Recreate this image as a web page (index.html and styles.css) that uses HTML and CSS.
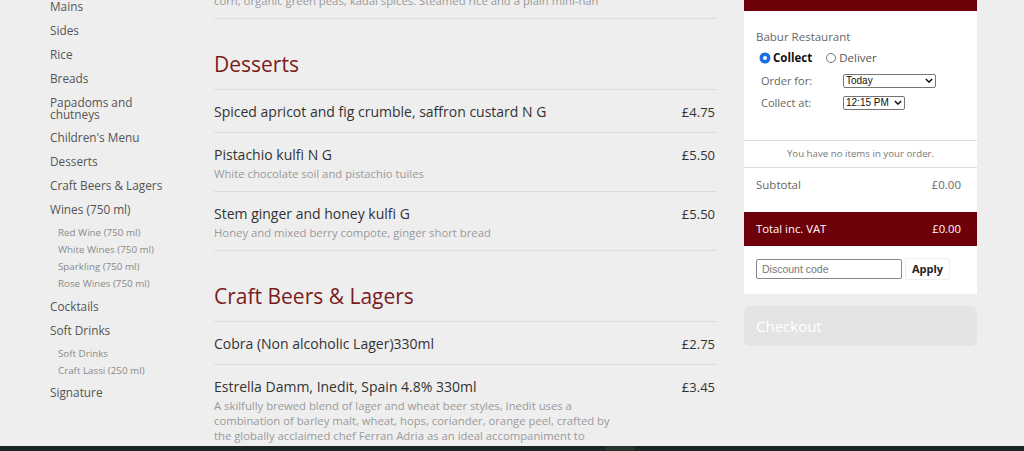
FILE: index.html
```html
<!DOCTYPE html>
<html lang="en">
<head>
<meta charset="utf-8">
<title>Babur Restaurant - Order</title>
<link rel="stylesheet" href="styles.css">
</head>
<body>
<div class="layout">
  <nav class="sidebar">
    <ul class="cats">
      <li class="cat">Mains</li>
      <li class="cat">Sides</li>
      <li class="cat">Rice</li>
      <li class="cat">Breads</li>
      <li class="cat two">Papadoms and<br>chutneys</li>
      <li class="cat">Children's Menu</li>
      <li class="cat">Desserts</li>
      <li class="cat">Craft Beers &amp; Lagers</li>
      <li class="cat">Wines (750 ml)
        <ul class="subs">
          <li class="sub">Red Wine (750 ml)</li>
          <li class="sub">White Wines (750 ml)</li>
          <li class="sub">Sparkling (750 ml)</li>
          <li class="sub">Rose Wines (750 ml)</li>
        </ul>
      </li>
      <li class="cat">Cocktails</li>
      <li class="cat">Soft Drinks
        <ul class="subs">
          <li class="sub">Soft Drinks</li>
          <li class="sub">Craft Lassi (250 ml)</li>
        </ul>
      </li>
      <li class="cat">Signature</li>
    </ul>
  </nav>

  <main class="menu">
    <section class="section">
      <ul class="items first">
        <li class="item">
          <div class="item-text">
            <div class="name">Vegetable thali</div>
            <div class="desc">Paneer makhani, dal, mixed vegetables, sweet<br>corn, organic green peas, kadai spices. Steamed rice and a plain mini-nan</div>
          </div>
          <div class="price">£14.95</div>
        </li>
      </ul>
    </section>

    <section class="section">
      <h2 class="heading">Desserts</h2>
      <ul class="items">
        <li class="item">
          <div class="item-text"><div class="name">Spiced apricot and fig crumble, saffron custard N G</div></div>
          <div class="price">£4.75</div>
        </li>
        <li class="item">
          <div class="item-text">
            <div class="name">Pistachio kulfi N G</div>
            <div class="desc">White chocolate soil and pistachio tuiles</div>
          </div>
          <div class="price">£5.50</div>
        </li>
        <li class="item">
          <div class="item-text">
            <div class="name">Stem ginger and honey kulfi G</div>
            <div class="desc">Honey and mixed berry compote, ginger short bread</div>
          </div>
          <div class="price">£5.50</div>
        </li>
      </ul>
    </section>

    <section class="section">
      <h2 class="heading">Craft Beers &amp; Lagers</h2>
      <ul class="items">
        <li class="item">
          <div class="item-text"><div class="name">Cobra (Non alcoholic Lager)330ml</div></div>
          <div class="price">£2.75</div>
        </li>
        <li class="item">
          <div class="item-text">
            <div class="name">Estrella Damm, Inedit, Spain 4.8% 330ml</div>
            <div class="desc">A skilfully brewed blend of lager and wheat beer styles, Inedit uses a<br>combination of barley malt, wheat, hops, coriander, orange peel, crafted by<br>the globally acclaimed chef Ferran Adria as an ideal accompaniment to<br>food.</div>
          </div>
          <div class="price">£3.45</div>
        </li>
      </ul>
    </section>
  </main>

  <aside class="order">
    <div class="panel">
      <div class="panel-head"></div>
      <div class="panel-body">
        <div class="restaurant">Babur Restaurant</div>
        <div class="mode">
          <label class="radio"><span class="dot on"></span><b>Collect</b></label>
          <label class="radio"><span class="dot"></span>Deliver</label>
        </div>
        <div class="field">
          <span class="label">Order for:</span>
          <span class="select wide">Today<svg class="chev" viewBox="0 0 10 6" width="8" height="5"><path d="M1 1l4 4 4-4" fill="none" stroke="#111" stroke-width="1.8"/></svg></span>
        </div>
        <div class="field">
          <span class="label">Collect at:</span>
          <span class="select">12:15 PM<svg class="chev" viewBox="0 0 10 6" width="8" height="5"><path d="M1 1l4 4 4-4" fill="none" stroke="#111" stroke-width="1.8"/></svg></span>
        </div>
      </div>
      <div class="empty">You have no items in your order.</div>
      <div class="row subtotal"><span>Subtotal</span><span>£0.00</span></div>
      <div class="row total"><span>Total inc. VAT</span><span>£0.00</span></div>
      <div class="discount">
        <span class="input">Discount code</span>
        <span class="apply">Apply</span>
      </div>
    </div>
    <div class="checkout">Checkout</div>
  </aside>
</div>
<div class="footer-bar"><span class="footer-tab"></span></div>
</body>
</html>
```

FILE: styles.css
```css
* { box-sizing: border-box; }
html, body { margin: 0; padding: 0; }
body {
  background: #eeeeee;
  font-family: "Open Sans", "Liberation Sans", sans-serif;
  color: #333;
  height: 451px;
  overflow: hidden;
}
ul { list-style: none; margin: 0; padding: 0; }

.layout {
  display: grid;
  grid-template-columns: 186px 502px 233px;
  column-gap: 28px;
  align-items: start;
}

/* sidebar */
.sidebar { padding-left: 50px; margin-top: -6px; }
.cat {
  font-size: 11.8px;
  line-height: 12px;
  padding: 6px 0;
  color: #555;
}
.cat.two { line-height: 12px; padding: 5.5px 0; }
.subs { padding: 9px 0 0 8px; margin-bottom: -4.5px; }
.sub {
  font-size: 9.8px;
  line-height: 17px;
  color: #8a8a8a;
}

/* menu */
.menu { margin-top: -55px; }
.heading {
  margin: 0;
  padding: 30px 0 10px;
  font-size: 21px;
  line-height: 30px;
  font-weight: 400;
  color: #7a1c1c;
}
.items { border-top: 1px solid #dcdcdc; }
.items.first { border-top: 0; }
.item {
  display: flex;
  justify-content: space-between;
  padding: 12px 0 10px;
  border-bottom: 1px solid #dcdcdc;
}
.name { font-size: 14px; line-height: 20px; color: #333; }
.desc {
  margin-top: 1px;
  font-size: 11.3px;
  line-height: 15px;
  color: #9a9a9a;
}
.price { font-size: 13px; line-height: 20px; color: #333; padding-right: 1px; }

/* order panel */
.order { margin-top: -29px; }
.panel { background: #fff; padding-bottom: 14px; }
.panel-head { height: 40px; background: #6d0008; }
.panel-body { padding: 19px 12px 30px; border-bottom: 1px solid #dedede; }
.restaurant { font-size: 11.5px; line-height: 14px; color: #666; }
.mode { display: flex; gap: 14px; margin-top: 7px; padding-left: 4px; font-size: 11.5px; line-height: 14px; }
.radio { display: flex; align-items: center; gap: 3px; color: #555; }
.radio b { color: #111; }
.dot {
  width: 10px; height: 10px; border-radius: 50%;
  border: 1px solid #777; background: #fff;
}
.dot.on { border: 3px solid #1a6fe0; background: #fff; box-shadow: 0 0 0 0.5px #1a6fe0; }
.field { display: flex; align-items: center; margin-top: 8px; padding-left: 5px; }
.field + .field { margin-top: 7px; }
.label { width: 82px; font-size: 11px; color: #666; }
.select {
  display: flex; align-items: center; justify-content: space-between;
  height: 14px; padding: 0 2px;
  border: 1px solid #767676; border-radius: 2px;
  font-family: "Liberation Sans", Arial, sans-serif;
  font-size: 10px; color: #111; background: #fff;
  width: 62px; white-space: nowrap;
}
.select.wide { width: 93px; }
.chev { margin-left: 3px; }
.empty {
  text-align: center; font-size: 9.7px; line-height: 26px; color: #777;
  border-bottom: 1px solid #dedede;
}
.row { display: flex; justify-content: space-between; padding: 0 16px 0 12px; font-size: 11.5px; color: #666; }
.subtotal { line-height: 34px; margin-bottom: 10px; }
.total { background: #6d0008; color: #fff; line-height: 34px; font-size: 11.3px; }
.discount { display: flex; align-items: center; gap: 3px; padding: 12px 12px 0; }
.input {
  width: 146px; height: 20px; padding: 0 5px;
  border: 1px solid #888; border-radius: 2px;
  font-family: "Liberation Sans", Arial, sans-serif; font-size: 10.5px; line-height: 18px; color: #777;
}
.apply {
  width: 45px; height: 22px; text-align: center;
  border: 1px solid #efefef; border-radius: 2px;
  font-size: 11px; font-weight: 700; line-height: 20px; color: #222;
}
.checkout {
  margin-top: 12px; height: 40px; border-radius: 6px;
  background: #e4e4e4; color: #fff; font-size: 15px; line-height: 40px; padding-left: 12px;
}

.footer-bar {
  position: fixed; left: 0; right: 0; bottom: 0; height: 5px; background: #1c2521;
}
.footer-tab {
  position: absolute; left: 605px; top: 0; width: 30px; height: 5px;
  background: #2a322e; border-radius: 4px 4px 0 0;
}
```
